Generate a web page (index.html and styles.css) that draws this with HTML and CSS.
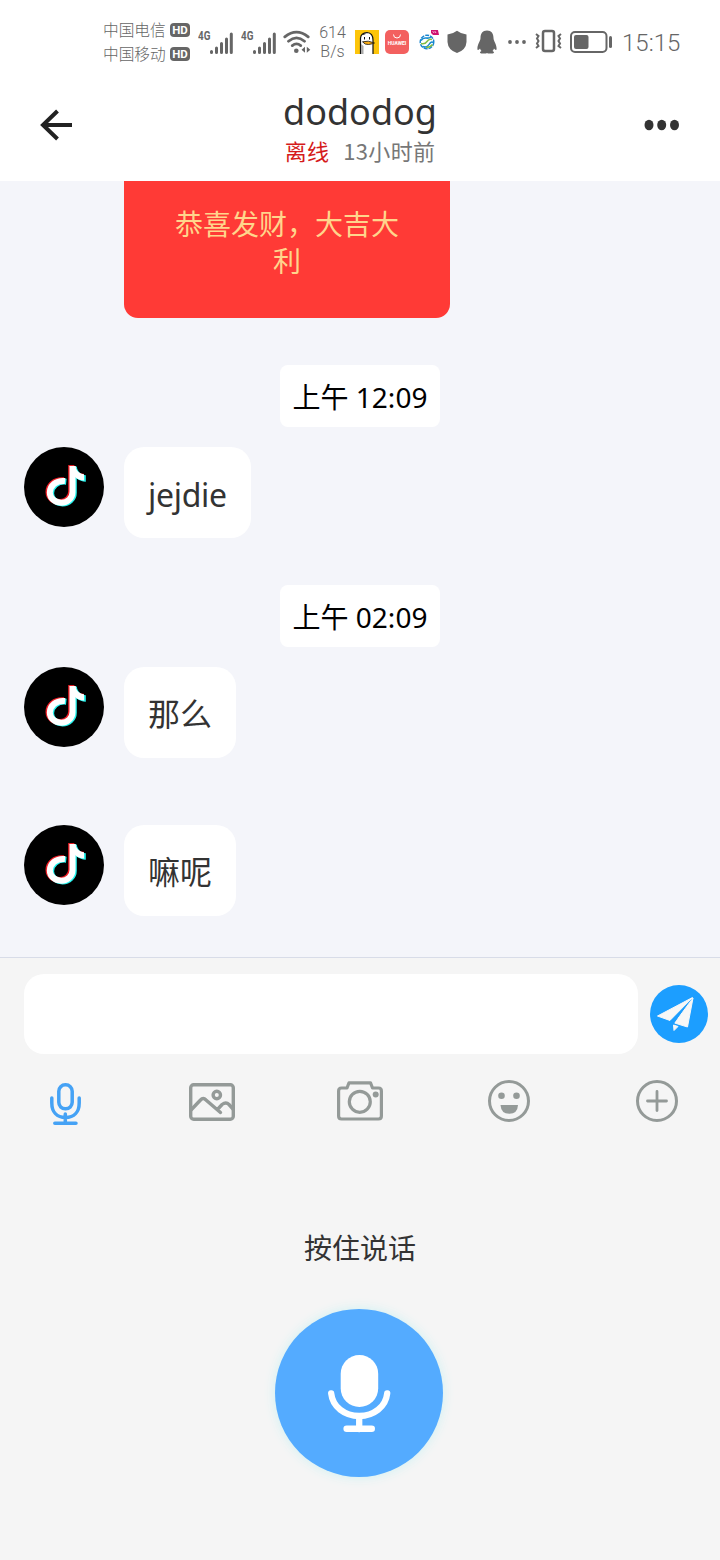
FILE: index.html
```html
<!DOCTYPE html>
<html lang="zh-CN">
<head>
<meta charset="utf-8">
<title>dododog</title>
<link rel="stylesheet" href="styles.css">
</head>
<body>
<svg class="defs" aria-hidden="true">
  <symbol id="note" viewBox="0 0 80 80">
    <g stroke-width="6" fill="none">
      <g stroke="#ee1d25" transform="translate(-1.300 -.7)"><path d="M41 34C32 33 25.800 39 25.800 45.500C25.800 51.500 31 55.700 37.200 55.700C43.500 55.700 48.500 51 48.500 45V19"/><path fill="#ee1d25" stroke="none" d="M45.500 19H51.500C52 24 56 27 61 27.500V34C57 34 54 32.500 51 30.500Z"/></g>
      <g stroke="#25f4ee" transform="translate(1.300 .7)"><path d="M41 34C32 33 25.800 39 25.800 45.500C25.800 51.500 31 55.700 37.200 55.700C43.500 55.700 48.500 51 48.500 45V19"/><path fill="#25f4ee" stroke="none" d="M45.500 19H51.500C52 24 56 27 60.500 27.500V34C57 34 54 32.500 51 30.500Z"/></g>
      <g stroke="#fff"><path d="M41 34C32 33 25.800 39 25.800 45.500C25.800 51.500 31 55.700 37.200 55.700C43.500 55.700 48.500 51 48.500 45V19"/><path fill="#fff" stroke="none" d="M45.500 19H51.500C52 24 55.500 26.700 60 27.200V33.500C56.500 33.500 53.500 32 51 30Z"/></g>
    </g>
  </symbol>
  <symbol id="bars" viewBox="0 0 36 26">
    <path stroke="#666" stroke-width="3" stroke-linecap="round" d="M14.500 22.500v1M19.500 19v4.500M24.500 14.500v9M29.500 10v13.500M34.300 5v18.500"/>
  </symbol>
</svg>

<header class="status">
  <div class="carriers">
    <div class="carrier">中国电信<span class="hd">HD</span></div>
    <div class="carrier">中国移动<span class="hd">HD</span></div>
  </div>
  <div class="signal"><span class="gen">4G</span><svg width="36" height="26"><use href="#bars"/></svg></div>
  <div class="signal"><span class="gen">4G</span><svg width="36" height="26"><use href="#bars"/></svg></div>
  <svg class="wifi" width="28" height="26" viewBox="283 28 28 26" fill="none" stroke="#666" stroke-width="2.800" stroke-linecap="round">
    <path d="M284.800 35.800Q296.500 26.500 308.200 35.800M288.500 40.200Q296.500 33.500 304.500 40.200M292.300 44.600Q296.500 41.200 300.700 44.600"/>
    <circle cx="296.300" cy="49.700" r="2.300" fill="#666" stroke="none"/>
    <path fill="#666" stroke="none" d="M305 45.800v6l-3.500-3zM306.800 45.800v6l3.500-3z"/>
  </svg>
  <div class="speed"><span>614</span><span>B/s</span></div>
  <svg class="duck" width="24" height="24" viewBox="0 0 24 24">
    <path fill="#fdc50a" d="M0 0h24v24H0z"/>
    <path fill="#fff" stroke="#111" stroke-width="1.200" d="M5.500 24V8Q6 3 12 2.500Q18 3 18 10V24"/>
    <path fill="#aaa" d="M6 14l2.500 2v8H6z"/>
    <path stroke="#111" fill="none" d="M9.500 7v2.500M14.500 7v2.500M7.500 4.500l3-.8"/>
    <path fill="#fbae17" stroke="#111" stroke-width=".8" d="M7.500 11.800Q13 10 19.500 13Q17 14 13.500 14.500Q10 15 7.500 11.800Z"/>
  </svg>
  <div class="huawei"><svg width="24" height="9" viewBox="0 0 24 9"><path d="M8.500 4.500a3.500 3.500 0 0 0 7 0" stroke="#fff" fill="none"/></svg><span>HUAWEI</span></div>
  <svg class="mobile" width="21" height="22" viewBox="419 29 21 22">
    <circle cx="427" cy="42" r="6.800" fill="#fff" stroke="#1684cf" stroke-width="1.400" stroke-dasharray="4 1"/>
    <path fill="none" stroke="#168ad0" stroke-width="1.500" d="M421 40.500q2-3 5-2.500t5-1M423 46.500q4 1.500 6-2t4.500-2"/>
    <path fill="none" stroke="#83bd45" stroke-width="1.500" d="M421 43.500q4 1 6-2t5-2M426 47.500q4 0 6.500-3"/>
    <path fill="#cf126f" d="M431 30h7l1 5h-6l-2-2z"/><path d="M432.500 31.500l1.500 1 1-1 1 1.500" fill="none" stroke="#fff" stroke-width=".7"/>
  </svg>
  <svg class="shield" width="20" height="24" viewBox="0 0 20 24"><path fill="#666" d="M10 .8Q14 4 19.500 4.500V12Q19 20 10 23Q1 20 .5 12V4.500Q6 4 10 .8Z"/></svg>
  <svg class="penguin" width="20" height="24" viewBox="0 0 20 24"><path fill="#666" d="M10 .5C14.500 .5 16.500 3.500 16.500 8C16.500 11 19.600 14 19.600 18.500C19.600 21 18 19.800 17 18.500Q16.500 20 15.500 21C18 22 17 23.500 15 23.500H11L10 23L9 23.500H5C3 23.500 2 22 4.500 21Q3.500 20 3 18.500C2 19.800 .4 21 .4 18.500C.4 14 3.500 11 3.500 8C3.500 3.500 5.500 .5 10 .5Z"/></svg>
  <svg class="dots" width="18" height="4" viewBox="0 0 18 4" fill="#666"><circle cx="2" cy="2" r="1.900"/><circle cx="9" cy="2" r="1.900"/><circle cx="16" cy="2" r="1.900"/></svg>
  <svg class="vibrate" width="27" height="24" viewBox="0 0 27 24" fill="none" stroke="#666"><rect x="8" y="2" width="11" height="20" rx="2" stroke-width="2.500"/><path stroke-width="2" d="M1 5l2.500 2L2 9.500L3.500 12L2 14.500L3.500 17L1 19M26 5l-2.500 2L25 9.500L23.500 12l1.500 2.500L23.500 17l2.500 2"/></svg>
  <svg class="battery" width="42" height="22" viewBox="0 0 42 22"><rect x="1" y="1" width="35.500" height="20" rx="4" fill="none" stroke="#666" stroke-width="2"/><rect x="4" y="4" width="14.500" height="14" rx="2" fill="#666"/><rect x="39" y="5" width="3" height="12" rx="1.500" fill="#666"/></svg>
  <time class="clock">15:15</time>
</header>

<nav class="top">
  <svg width="34" height="34" viewBox="0 0 34 34" fill="none" stroke="#222" stroke-width="4"><path d="M18.500 3L4 17L18.500 31M4 17H33"/></svg>
  <div class="peer">
    <h1>dododog</h1>
    <p><span class="offline">离线</span><span>13小时前</span></p>
  </div>
  <svg width="36" height="12" viewBox="0 0 36 12" fill="#333"><ellipse cx="5" cy="6" rx="4.500" ry="5.200"/><ellipse cx="17.700" cy="6" rx="4.500" ry="5.200"/><ellipse cx="30.500" cy="6" rx="4.500" ry="5.200"/></svg>
</nav>

<main class="chat">
  <div class="packet">恭喜发财，大吉大利</div>
  <time class="stamp">上午 12:09</time>
  <div class="message"><svg class="avatar"><use href="#note"/></svg><p class="bubble latin">jejdie</p></div>
  <time class="stamp">上午 02:09</time>
  <div class="message"><svg class="avatar"><use href="#note"/></svg><p class="bubble">那么</p></div>
  <div class="message next"><svg class="avatar"><use href="#note"/></svg><p class="bubble">嘛呢</p></div>
</main>

<footer class="composer">
  <div class="entry">
    <div class="field" role="textbox"></div>
    <svg class="send" width="58" height="58" viewBox="0 0 58 58"><circle cx="29" cy="29" r="29" fill="#1c9eff"/><path fill="#f7f7f7" stroke="#f7f7f7" stroke-linejoin="round" d="M42.500 12.500L7.500 31L20 35.500ZM43 13L37.500 42L24.500 38ZM23.500 40L28 41.500L24 45.500Z"/><path d="M35.500 21L20.500 35.800L24 38.500Z" fill="#1c9eff"/></svg>
  </div>
  <div class="tools">
    <svg width="48" height="46" viewBox="41 1080 48 46" fill="none" stroke="#45a2f5" stroke-width="3.500" stroke-linecap="round"><rect x="58.800" y="1084.800" width="13.400" height="24" rx="6.500"/><path d="M51.800 1098V1103C51.800 1112 57 1117.500 65.500 1117.500S79.200 1112 79.200 1103V1098M65.300 1114V1123M54.800 1123.200H76"/></svg>
    <svg width="48" height="46" viewBox="189 1080 48 46" fill="none" stroke="#949a98" stroke-width="3.400" stroke-linecap="round"><rect x="190.700" y="1084.700" width="42.600" height="34.600" rx="3"/><circle cx="216.800" cy="1095" r="3.700"/><path d="M191.500 1109.500L200.500 1100Q203.200 1097 206 1100L220.500 1112.500M217.500 1109.500L222 1104.500Q226 1101.500 229 1104.500L233 1109"/></svg>
    <svg width="48" height="46" viewBox="337 1080 48 46" fill="none" stroke="#949a98" stroke-width="3.200" stroke-linejoin="round"><path d="M341.500 1088H347L349 1082.800H370.500L372.500 1088H378.500Q381.400 1088 381.400 1091V1116Q381.400 1119 378.500 1119H341.500Q338.600 1119 338.600 1116V1091Q338.600 1088 341.500 1088Z"/><circle cx="359.800" cy="1101.800" r="10.500"/><circle cx="375.700" cy="1094.500" r="3" fill="#949a98" stroke="none"/></svg>
    <svg width="48" height="46" viewBox="485 1080 48 46"><circle cx="509" cy="1101" r="19.500" fill="none" stroke="#949a98" stroke-width="3"/><g fill="#949a98"><circle cx="501.500" cy="1095.700" r="3.300"/><circle cx="516.500" cy="1095.700" r="3.300"/><path d="M500.500 1105H518Q517.500 1113.800 509.300 1113.800T500.500 1105Z"/></g></svg>
    <svg width="48" height="46" viewBox="633 1080 48 46" fill="none" stroke="#949a98" stroke-width="3" stroke-linecap="round"><circle cx="657" cy="1101" r="19.500"/><path stroke-width="2.800" d="M657 1091.500V1110.500M647.500 1101H666.500"/></svg>
  </div>
  <p class="hint">按住说话</p>
  <div class="record"><svg width="64" height="80" viewBox="-.7 0 64 80"><rect x="13" y="2" width="37.500" height="52" rx="18.700" fill="#fff"/><path d="M3.500 40.500C5 54 17 63 31.500 63S58 54 59.500 40.500M31.500 63V76" stroke="#fff" stroke-width="6.300" fill="none" stroke-linecap="round"/><path d="M19 75.700H44" stroke="#fff" stroke-width="6.600" stroke-linecap="round"/></svg></div>
</footer>
</body>
</html>
```
FILE: styles.css
```css
* { box-sizing: border-box; margin: 0; padding: 0; }
body {
  width: 720px;
  height: 1560px;
  display: flex;
  flex-direction: column;
  overflow: hidden;
  background: #fff;
  color: #333;
  font-family: "Noto Sans", "Noto Sans CJK SC", sans-serif;
}
svg { display: block; flex: none; }
.defs { display: none; }

.status { height: 84px; display: flex; align-items: center; padding-left: 103px; color: #666; flex: none; }
.carriers { width: 87px; display: flex; flex-direction: column; }
.carrier { display: flex; align-items: center; justify-content: space-between; height: 24px; font: 300 15.7px/24px "Noto Sans CJK SC", sans-serif; white-space: nowrap; }
.hd { width: 20px; height: 14px; border-radius: 4px; background: #666; color: #fff; font: 700 11.5px/14px Roboto, sans-serif; text-align: center; }
.signal { width: 36px; height: 26px; margin-left: 7px; position: relative; flex: none; }
.gen { position: absolute; left: 1px; top: 0; font: 700 12px/14px Roboto, sans-serif; transform: scaleX(.82); transform-origin: left; }
.wifi { margin-left: 7px; }
.speed { width: 29px; margin-left: 7px; display: flex; flex-direction: column; align-items: center; font: 300 16px/19px Roboto, sans-serif; }
.duck { margin-left: 8px; }
.huawei { width: 24px; height: 24px; margin-left: 6px; border-radius: 5px; background: #f3605f; color: #fff; flex: none; text-align: center; }
.huawei span { display: block; font: 700 5px/7px Roboto, sans-serif; margin-top: 1px; }
.mobile { margin: -4px 0 0 10px; }
.shield { margin-left: 7px; }
.penguin { margin-left: 10px; }
.dots { margin-left: 11px; }
.vibrate { margin-left: 9px; margin-top: -2px; }
.battery { margin-left: 8px; }
.clock { margin-left: 10px; font: 300 24px/28px Roboto, sans-serif; padding-top: 2px; }

.top { height: 97px; flex: none; display: flex; align-items: center; justify-content: space-between; padding: 0 40px 15px 39px; }
.peer { display: flex; flex-direction: column; align-items: center; padding: 5px 0 0 3px; }
.peer h1 { font-size: 36px; font-weight: 400; line-height: 44px; }
.peer p { display: flex; gap: 14px; font: 400 22px/32px "Noto Sans CJK SC", sans-serif; letter-spacing: .3px; color: #777; }
.peer .offline { color: #d51b1b; }

.chat { height: 776px; flex: none; background: #f4f5fa; display: flex; flex-direction: column; padding: 0 24px; }
.packet { width: 326px; height: 137px; margin-left: 100px; padding: 25px 48px 0; border-radius: 0 0 14px 14px; background: #ff3a36; color: #ffd58c; font-size: 28px; line-height: 37px; text-align: center; flex: none; }
.stamp { align-self: center; width: 160px; height: 62px; margin: 47px 0 20px; border-radius: 8px; background: #fff; color: #000; font-size: 28px; line-height: 64px; text-align: center; white-space: nowrap; flex: none; }
.message { display: flex; align-items: flex-start; gap: 20px; height: 91px; flex: none; }
.message.next { margin-top: 67px; }
.avatar { width: 80px; height: 80px; border-radius: 50%; background: #000; }
.bubble { height: 91px; padding: 0 24px; border-radius: 20px; background: #fff; font-size: 32px; line-height: 94px; white-space: nowrap; }
.bubble.latin { letter-spacing: -.3px; line-height: 95px; }

.composer { flex: 1; background: #f5f5f5; border-top: 1px solid #d8dce8; display: flex; flex-direction: column; align-items: center; }
.entry { width: 100%; display: flex; align-items: center; gap: 12px; padding: 16px 12px 0 24px; }
.field { flex: 1; height: 80px; border-radius: 20px; background: #fff; }
.tools { width: 100%; display: flex; justify-content: space-between; padding: 26px 39px 0 41px; }
.hint { margin-top: 102px; font-size: 28px; line-height: 40px; }
.record { width: 168px; height: 168px; margin: 41px 2px 0 0; border-radius: 50%; background: #54abff; box-shadow: 0 0 12px #cdf1f3; display: flex; align-items: center; justify-content: center; }
```
